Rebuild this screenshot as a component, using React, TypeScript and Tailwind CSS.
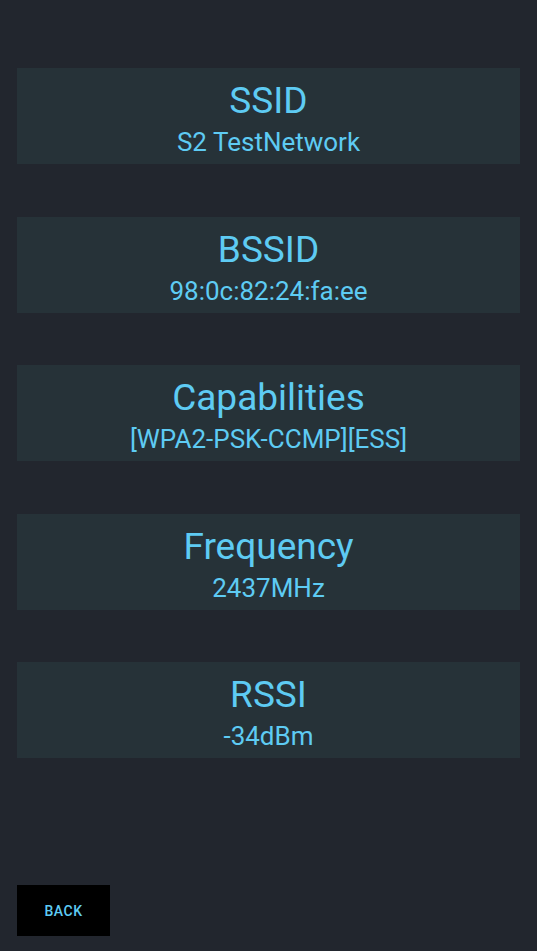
import React from 'react';

const rows = [
  { label: 'SSID', value: 'S2 TestNetwork' },
  { label: 'BSSID', value: '98:0c:82:24:fa:ee' },
  { label: 'Capabilities', value: '[WPA2-PSK-CCMP][ESS]' },
  { label: 'Frequency', value: '2437MHz' },
  { label: 'RSSI', value: '-34dBm' },
];

export default function App() {
  return (
    <div className="w-[537px] h-[951px] bg-[#22262e] flex flex-col px-[17px] pt-[68px] pb-[15px] font-['Roboto',sans-serif] text-[#5ecbf3]">
      <div className="flex flex-col gap-[52.5px]">
        {rows.map((r) => (
          <div key={r.label} className="bg-[#263238] h-[96px] flex flex-col items-center pt-[11px]">
            <div className="text-[37px] leading-[44px]">{r.label}</div>
            <div className="text-[26px] leading-[38px]">{r.value}</div>
          </div>
        ))}
      </div>
      <div className="mt-auto">
        <button className="bg-black w-[93px] h-[51px] pt-px text-[14px] tracking-[0.5px] font-medium text-[#5ecbf3] uppercase">
          Back
        </button>
      </div>
    </div>
  );
}
